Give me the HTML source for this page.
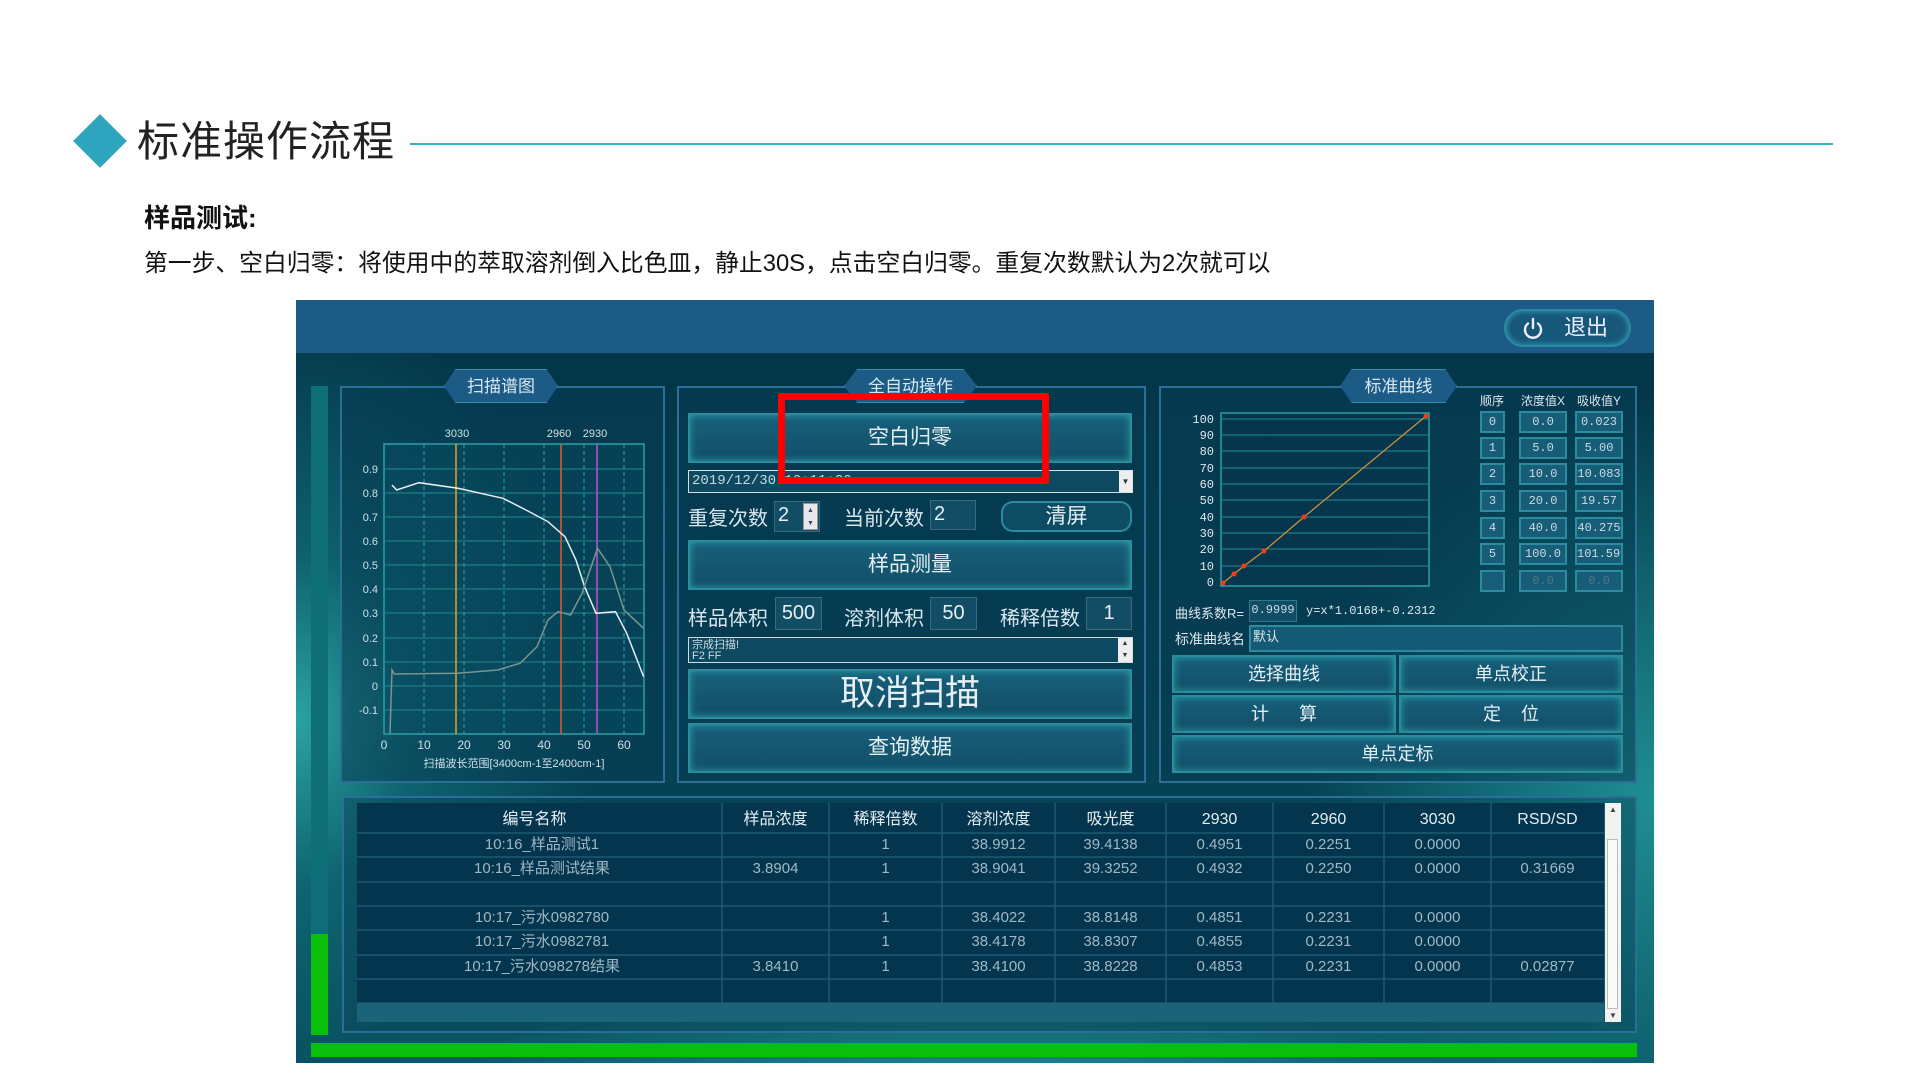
<!DOCTYPE html>
<html><head><meta charset="utf-8"><style>
*{margin:0;padding:0;box-sizing:border-box}
body{width:1920px;height:1080px;background:#fff;position:relative;overflow:hidden;font-family:"Liberation Sans","Noto Sans CJK SC",sans-serif}
.a{position:absolute}
.panel{position:absolute;border:2px solid #2b6f96;background:rgba(8,60,84,0.55)}
.tab{position:absolute;height:34px;background:#1b5b85;color:#d8e8f0;font-size:17px;line-height:34px;text-align:center;clip-path:polygon(10% 0,90% 0,100% 50%,90% 100%,10% 100%,0 50%);border:1px solid #3a8ab0}
.btn{position:absolute;background:linear-gradient(#175f7a,#124f68);border:2px solid #2a8c9c;box-shadow:inset 0 0 8px #2aa0a8;color:#e6f0f4;text-align:center;font-size:21px}
.lab{position:absolute;color:#d8e6ee;font-size:20px}
.box{position:absolute;background:#114e66;border:1px solid #3b6a78;color:#e8f0f4;font-size:20px;text-align:center}
.cell{position:absolute;background:#175d78;border:2px solid #2a8c9c;color:#c8dce4;font-family:"Liberation Mono",monospace;font-size:12px;text-align:center;line-height:18px}
.th{position:absolute;color:#e4eef2;font-size:16px;text-align:center;top:808px;line-height:24px}
.td{position:absolute;color:#9fb8c4;font-size:15px;text-align:center;line-height:24px}
</style></head><body>
<div class="a" style="left:81px;top:122px;width:38px;height:38px;background:#2ea5bf;transform:rotate(45deg)"></div>
<div class="a" style="left:137px;top:114px;font-size:42px;color:#222;line-height:56px;letter-spacing:1px">标准操作流程</div>
<div class="a" style="left:410px;top:143px;width:1423px;height:2px;background:#3aaec4"></div>
<div class="a" style="left:144px;top:203px;font-size:26px;font-weight:bold;color:#111;line-height:30px">样品测试:</div>
<div class="a" style="left:144px;top:250px;font-size:23.8px;color:#111;line-height:28px;white-space:nowrap">第一步、空白归零：将使用中的萃取溶剂倒入比色皿，静止30S，点击空白归零。重复次数默认为2次就可以</div>

<div class="a" style="left:296px;top:300px;width:1358px;height:763px;background:radial-gradient(ellipse 300px 420px at 0px 420px,#2aa3a0 0%,rgba(20,120,130,0.6) 40%,rgba(0,0,0,0) 100%),radial-gradient(ellipse 700px 120px at 700px 790px,#1f8f95 0%,rgba(0,0,0,0) 100%),radial-gradient(ellipse 350px 400px at 1358px 500px,#1e8e94 0%,rgba(0,0,0,0) 100%),linear-gradient(#033447,#064a5c)"></div>
<div class="a" style="left:296px;top:300px;width:1358px;height:53px;background:#1b5b85"></div>
<div class="a" style="left:1504px;top:309px;width:127px;height:38px;border-radius:19px;background:#17587a;border:2px solid #2a8aa6;box-shadow:inset 0 0 6px #37a6b8;color:#eef;font-size:22px;line-height:34px;padding-left:58px">退出</div>
<svg class="a" style="left:1520px;top:316px" width="26" height="26" viewBox="0 0 26 26"><path d="M8 7.5A8 8 0 1 0 18 7.5" fill="none" stroke="#eef" stroke-width="2.4" stroke-linecap="round"/><path d="M13 3V12" stroke="#eef" stroke-width="2.4" stroke-linecap="round"/></svg>

<div class="a" style="left:311px;top:386px;width:17px;height:548px;background:#0e6f79"></div>
<div class="a" style="left:311px;top:934px;width:17px;height:101px;background:#0abf0a"></div>
<div class="a" style="left:311px;top:1043px;width:1326px;height:14px;background:#0abf0a"></div>

<div class="panel" style="left:340px;top:386px;width:325px;height:397px"></div>
<div class="panel" style="left:677px;top:386px;width:469px;height:397px"></div>
<div class="panel" style="left:1159px;top:386px;width:478px;height:397px"></div>
<div class="tab" style="left:444px;top:369px;width:114px">扫描谱图</div>
<div class="tab" style="left:844px;top:369px;width:133px">全自动操作</div>
<div class="tab" style="left:1340px;top:369px;width:117px">标准曲线</div>

<svg class="a" style="left:0;top:0" width="1920" height="1080">
<rect x="384" y="444" width="260" height="290" fill="rgba(10,80,100,0.35)" stroke="#2aa0a8" stroke-width="1.5"/>
<g stroke="#22898f" stroke-width="1">
<line x1="384" y1="469" x2="644" y2="469"/><line x1="384" y1="493" x2="644" y2="493"/><line x1="384" y1="517" x2="644" y2="517"/><line x1="384" y1="541" x2="644" y2="541"/><line x1="384" y1="565" x2="644" y2="565"/><line x1="384" y1="589" x2="644" y2="589"/><line x1="384" y1="613" x2="644" y2="613"/><line x1="384" y1="638" x2="644" y2="638"/><line x1="384" y1="662" x2="644" y2="662"/><line x1="384" y1="686" x2="644" y2="686"/><line x1="384" y1="710" x2="644" y2="710"/>
</g>
<g stroke="#2aa6a8" stroke-width="1" stroke-dasharray="4 3">
<line x1="424" y1="444" x2="424" y2="734"/><line x1="464" y1="444" x2="464" y2="734"/><line x1="504" y1="444" x2="504" y2="734"/><line x1="544" y1="444" x2="544" y2="734"/><line x1="584" y1="444" x2="584" y2="734"/><line x1="624" y1="444" x2="624" y2="734"/>
</g>
<line x1="456" y1="444" x2="456" y2="734" stroke="#e8a020" stroke-width="1.5"/>
<line x1="561" y1="444" x2="561" y2="734" stroke="#e05a30" stroke-width="1.5"/>
<line x1="597" y1="444" x2="597" y2="734" stroke="#c050d0" stroke-width="1.5"/>
<polyline fill="none" stroke="#e8eef0" stroke-width="1.5" points="392,485 396.6,490 419,482.7 458,488.3 503,498.3 526,510 548,521.7 565,536.7 576,560 584.6,586.7 596,613.3 615.5,611.7 626.7,633.3 643.6,676.7"/>
<polyline fill="none" stroke="#7a9490" stroke-width="1.5" points="390,733 392,670 394.4,674 458,673.3 497.6,670 520,663.3 537,646.7 548,620 558,611.7 570.6,615 582,593.3 597.5,548.3 610,566.7 624,610 643.6,628.3"/>
<g fill="#cfe0e6" font-size="11" font-family="Liberation Sans" text-anchor="end">
<text x="378" y="473">0.9</text><text x="378" y="497">0.8</text><text x="378" y="521">0.7</text><text x="378" y="545">0.6</text><text x="378" y="569">0.5</text><text x="378" y="593">0.4</text><text x="378" y="617">0.3</text><text x="378" y="642">0.2</text><text x="378" y="666">0.1</text><text x="378" y="690">0</text><text x="378" y="714">-0.1</text>
</g>
<g fill="#cfe0e6" font-size="12" font-family="Liberation Sans" text-anchor="middle">
<text x="384" y="749">0</text><text x="424" y="749">10</text><text x="464" y="749">20</text><text x="504" y="749">30</text><text x="544" y="749">40</text><text x="584" y="749">50</text><text x="624" y="749">60</text>
<text x="457" y="437" font-size="11">3030</text><text x="559" y="437" font-size="11">2960</text><text x="595" y="437" font-size="11">2930</text>
<text x="514" y="767" font-size="11" font-family="Liberation Sans,Noto Sans CJK SC">扫描波长范围[3400cm-1至2400cm-1]</text>
</g>
<rect x="1221" y="413" width="208" height="173" fill="rgba(5,50,75,0.5)" stroke="#2aa0a8" stroke-width="1.5"/>
<g stroke="#22898f" stroke-width="1">
<line x1="1221" y1="419" x2="1429" y2="419"/><line x1="1221" y1="435" x2="1429" y2="435"/><line x1="1221" y1="451" x2="1429" y2="451"/><line x1="1221" y1="468" x2="1429" y2="468"/><line x1="1221" y1="484" x2="1429" y2="484"/><line x1="1221" y1="500" x2="1429" y2="500"/><line x1="1221" y1="517" x2="1429" y2="517"/><line x1="1221" y1="533" x2="1429" y2="533"/><line x1="1221" y1="549" x2="1429" y2="549"/><line x1="1221" y1="566" x2="1429" y2="566"/>
</g>
<polyline fill="none" stroke="#c8903a" stroke-width="1.3" points="1223,583 1234,574 1244,566 1264,551 1304,517 1426,416"/>
<g fill="#ff3a10"><circle cx="1223" cy="583" r="2.5"/><circle cx="1234" cy="574" r="2.5"/><circle cx="1244" cy="566" r="2.5"/><circle cx="1264" cy="551" r="2.5"/><circle cx="1304" cy="517" r="2.5"/><circle cx="1426" cy="416" r="2.5"/></g>
<g fill="#dfe8ee" font-size="12" font-family="Liberation Mono" text-anchor="end">
<text x="1214" y="423">100</text><text x="1214" y="439">90</text><text x="1214" y="455">80</text><text x="1214" y="472">70</text><text x="1214" y="488">60</text><text x="1214" y="504">50</text><text x="1214" y="521">40</text><text x="1214" y="537">30</text><text x="1214" y="553">20</text><text x="1214" y="570">10</text><text x="1214" y="586">0</text>
</g>
</svg>

<div class="btn" style="left:688px;top:413px;width:444px;height:50px;line-height:46px">空白归零</div>
<div class="a" style="left:688px;top:470px;width:445px;height:23px;background:#0d4a62;border:1px solid #d8e0e4;color:#c8d8e0;font-family:'Liberation Mono',monospace;font-size:14px;line-height:21px;padding-left:3px">2019/12/30 10:11:20</div>
<div class="a" style="left:1119px;top:471px;width:13px;height:21px;background:#eee;color:#333;font-size:8px;text-align:center;line-height:21px">▼</div>
<div class="a" style="left:778px;top:393px;width:271px;height:91px;border:7px solid #ff0000"></div>
<div class="lab" style="left:688px;top:502px">重复次数</div>
<div class="box" style="left:774px;top:501px;width:46px;height:31px;text-align:left;padding-left:3px;line-height:26px">2</div>
<div class="a" style="left:803px;top:503px;width:15px;height:27px;background:#e6e8ec;border:1px solid #999;font-size:7px;color:#446;text-align:center;line-height:13px">▲<br>▼</div>
<div class="lab" style="left:844px;top:502px">当前次数</div>
<div class="box" style="left:930px;top:500px;width:46px;height:30px;text-align:left;padding-left:3px;line-height:26px">2</div>
<div class="a" style="left:1001px;top:501px;width:131px;height:31px;border-radius:12px;border:2px solid #2a8c9c;background:#0e4c63;color:#e6f0f4;font-size:21px;text-align:center;line-height:27px">清屏</div>
<div class="btn" style="left:688px;top:540px;width:444px;height:50px;line-height:46px">样品测量</div>
<div class="lab" style="left:688px;top:602px">样品体积</div>
<div class="box" style="left:775px;top:597px;width:47px;height:33px;line-height:31px">500</div>
<div class="lab" style="left:844px;top:602px">溶剂体积</div>
<div class="box" style="left:930px;top:597px;width:47px;height:33px;line-height:31px">50</div>
<div class="lab" style="left:1000px;top:602px">稀释倍数</div>
<div class="box" style="left:1086px;top:597px;width:46px;height:33px;line-height:31px">1</div>
<div class="a" style="left:688px;top:637px;width:445px;height:26px;background:#0d4a62;border:1px solid #d0dadf;color:#d0dce2;font-size:11px;line-height:11px;padding:2px 3px">宗成扫描!<br>F2 FF</div>
<div class="a" style="left:1118px;top:638px;width:14px;height:24px;background:#eee;color:#333;font-size:7px;text-align:center;line-height:12px">▲<br>▼</div>
<div class="btn" style="left:688px;top:669px;width:444px;height:50px;line-height:46px;font-size:35px">取消扫描</div>
<div class="btn" style="left:688px;top:723px;width:444px;height:50px;line-height:46px">查询数据</div>

<div class="a" style="left:1480px;top:392px;color:#dfe8ee;font-size:12px">顺序</div>
<div class="a" style="left:1521px;top:392px;color:#dfe8ee;font-size:12px">浓度值X</div>
<div class="a" style="left:1577px;top:392px;color:#dfe8ee;font-size:12px">吸收值Y</div>
<div class="cell" style="left:1480px;top:411px;width:25px;height:22px">0</div><div class="cell" style="left:1519px;top:411px;width:48px;height:22px">0.0</div><div class="cell" style="left:1575px;top:411px;width:48px;height:22px">0.023</div>
<div class="cell" style="left:1480px;top:437px;width:25px;height:22px">1</div><div class="cell" style="left:1519px;top:437px;width:48px;height:22px">5.0</div><div class="cell" style="left:1575px;top:437px;width:48px;height:22px">5.00</div>
<div class="cell" style="left:1480px;top:463px;width:25px;height:22px">2</div><div class="cell" style="left:1519px;top:463px;width:48px;height:22px">10.0</div><div class="cell" style="left:1575px;top:463px;width:48px;height:22px">10.083</div>
<div class="cell" style="left:1480px;top:490px;width:25px;height:22px">3</div><div class="cell" style="left:1519px;top:490px;width:48px;height:22px">20.0</div><div class="cell" style="left:1575px;top:490px;width:48px;height:22px">19.57</div>
<div class="cell" style="left:1480px;top:517px;width:25px;height:22px">4</div><div class="cell" style="left:1519px;top:517px;width:48px;height:22px">40.0</div><div class="cell" style="left:1575px;top:517px;width:48px;height:22px">40.275</div>
<div class="cell" style="left:1480px;top:543px;width:25px;height:22px">5</div><div class="cell" style="left:1519px;top:543px;width:48px;height:22px">100.0</div><div class="cell" style="left:1575px;top:543px;width:48px;height:22px;overflow:hidden;white-space:nowrap">101.596</div>
<div class="cell" style="left:1480px;top:570px;width:25px;height:22px"></div><div class="cell" style="left:1519px;top:570px;width:48px;height:22px;color:#4c7a88">0.0</div><div class="cell" style="left:1575px;top:570px;width:48px;height:22px;color:#4c7a88">0.0</div>
<div class="a" style="left:1175px;top:603px;color:#dfe8ee;font-size:13px">曲线系数R=</div>
<div class="cell" style="left:1249px;top:600px;width:48px;height:22px;background:#114e66;border:1px solid #2a7a8a">0.9999</div>
<div class="a" style="left:1306px;top:604px;color:#dfe8ee;font-size:12px;font-family:'Liberation Mono',monospace">y=x*1.0168+-0.2312</div>
<div class="a" style="left:1175px;top:629px;color:#dfe8ee;font-size:14px">标准曲线名</div>
<div class="a" style="left:1249px;top:625px;width:374px;height:27px;background:#145a74;border:2px solid #2a8c9c;color:#dfe8ee;font-size:13px;padding-left:2px;line-height:20px">默认</div>
<div class="btn" style="left:1172px;top:655px;width:224px;height:38px;line-height:34px;font-size:18px">选择曲线</div>
<div class="btn" style="left:1399px;top:655px;width:224px;height:38px;line-height:34px;font-size:18px">单点校正</div>
<div class="btn" style="left:1172px;top:695px;width:224px;height:38px;line-height:34px;font-size:18px">计&nbsp;&nbsp;&nbsp;&nbsp;&nbsp;&nbsp;算</div>
<div class="btn" style="left:1399px;top:695px;width:224px;height:38px;line-height:34px;font-size:18px">定&nbsp;&nbsp;&nbsp;&nbsp;位</div>
<div class="btn" style="left:1172px;top:735px;width:451px;height:38px;line-height:34px;font-size:18px">单点定标</div>

<div class="a" style="left:342px;top:796px;width:1295px;height:237px;border:2px solid #2b6f96;background:rgba(10,70,90,0.5)"></div>
<div class="a" style="left:357px;top:803px;width:1247px;height:200px;background:#04354e"></div>
<div class="a" style="left:357px;top:1003px;width:1247px;height:19px;background:#1b6378"></div>
<div class="a" style="left:1605px;top:803px;width:16px;height:219px;background:#f2f2f2;color:#444;font-size:8px;text-align:center"><div style="margin-top:2px">▲</div><div style="position:absolute;left:2px;top:36px;width:11px;height:170px;border:1px solid #bbb;background:#fafafa"></div><div style="position:absolute;bottom:2px;width:16px">▼</div></div>
<svg class="a" style="left:0;top:0" width="1920" height="1080"><g stroke="#1d5a72" stroke-width="1.5">
<line x1="357" y1="833" x2="1604" y2="833"/><line x1="357" y1="857" x2="1604" y2="857"/><line x1="357" y1="882" x2="1604" y2="882"/><line x1="357" y1="906" x2="1604" y2="906"/><line x1="357" y1="930" x2="1604" y2="930"/><line x1="357" y1="955" x2="1604" y2="955"/><line x1="357" y1="979" x2="1604" y2="979"/><line x1="357" y1="1003" x2="1604" y2="1003"/>
<line x1="722" y1="803" x2="722" y2="1003"/><line x1="829" y1="803" x2="829" y2="1003"/><line x1="942" y1="803" x2="942" y2="1003"/><line x1="1055" y1="803" x2="1055" y2="1003"/><line x1="1166" y1="803" x2="1166" y2="1003"/><line x1="1273" y1="803" x2="1273" y2="1003"/><line x1="1384" y1="803" x2="1384" y2="1003"/><line x1="1491" y1="803" x2="1491" y2="1003"/>
</g></svg>
<div class="th" style="left:357px;width:355px">编号名称</div>
<div class="th" style="left:722px;width:107px">样品浓度</div>
<div class="th" style="left:829px;width:113px">稀释倍数</div>
<div class="th" style="left:942px;width:113px">溶剂浓度</div>
<div class="th" style="left:1055px;width:111px">吸光度</div>
<div class="th" style="left:1166px;width:107px">2930</div>
<div class="th" style="left:1273px;width:111px">2960</div>
<div class="th" style="left:1384px;width:107px">3030</div>
<div class="th" style="left:1491px;width:113px">RSD/SD</div>

<div class="td" style="left:357px;top:833px;width:370px">10:16_样品测试1</div>
<div class="td" style="left:829px;top:833px;width:113px">1</div>
<div class="td" style="left:942px;top:833px;width:113px">38.9912</div>
<div class="td" style="left:1055px;top:833px;width:111px">39.4138</div>
<div class="td" style="left:1166px;top:833px;width:107px">0.4951</div>
<div class="td" style="left:1273px;top:833px;width:111px">0.2251</div>
<div class="td" style="left:1384px;top:833px;width:107px">0.0000</div>

<div class="td" style="left:357px;top:857px;width:370px">10:16_样品测试结果</div>
<div class="td" style="left:722px;top:857px;width:107px">3.8904</div>
<div class="td" style="left:829px;top:857px;width:113px">1</div>
<div class="td" style="left:942px;top:857px;width:113px">38.9041</div>
<div class="td" style="left:1055px;top:857px;width:111px">39.3252</div>
<div class="td" style="left:1166px;top:857px;width:107px">0.4932</div>
<div class="td" style="left:1273px;top:857px;width:111px">0.2250</div>
<div class="td" style="left:1384px;top:857px;width:107px">0.0000</div>
<div class="td" style="left:1491px;top:857px;width:113px">0.31669</div>

<div class="td" style="left:357px;top:906px;width:370px">10:17_污水0982780</div>
<div class="td" style="left:829px;top:906px;width:113px">1</div>
<div class="td" style="left:942px;top:906px;width:113px">38.4022</div>
<div class="td" style="left:1055px;top:906px;width:111px">38.8148</div>
<div class="td" style="left:1166px;top:906px;width:107px">0.4851</div>
<div class="td" style="left:1273px;top:906px;width:111px">0.2231</div>
<div class="td" style="left:1384px;top:906px;width:107px">0.0000</div>

<div class="td" style="left:357px;top:930px;width:370px">10:17_污水0982781</div>
<div class="td" style="left:829px;top:930px;width:113px">1</div>
<div class="td" style="left:942px;top:930px;width:113px">38.4178</div>
<div class="td" style="left:1055px;top:930px;width:111px">38.8307</div>
<div class="td" style="left:1166px;top:930px;width:107px">0.4855</div>
<div class="td" style="left:1273px;top:930px;width:111px">0.2231</div>
<div class="td" style="left:1384px;top:930px;width:107px">0.0000</div>

<div class="td" style="left:357px;top:955px;width:370px">10:17_污水098278结果</div>
<div class="td" style="left:722px;top:955px;width:107px">3.8410</div>
<div class="td" style="left:829px;top:955px;width:113px">1</div>
<div class="td" style="left:942px;top:955px;width:113px">38.4100</div>
<div class="td" style="left:1055px;top:955px;width:111px">38.8228</div>
<div class="td" style="left:1166px;top:955px;width:107px">0.4853</div>
<div class="td" style="left:1273px;top:955px;width:111px">0.2231</div>
<div class="td" style="left:1384px;top:955px;width:107px">0.0000</div>
<div class="td" style="left:1491px;top:955px;width:113px">0.02877</div>
</body></html>
